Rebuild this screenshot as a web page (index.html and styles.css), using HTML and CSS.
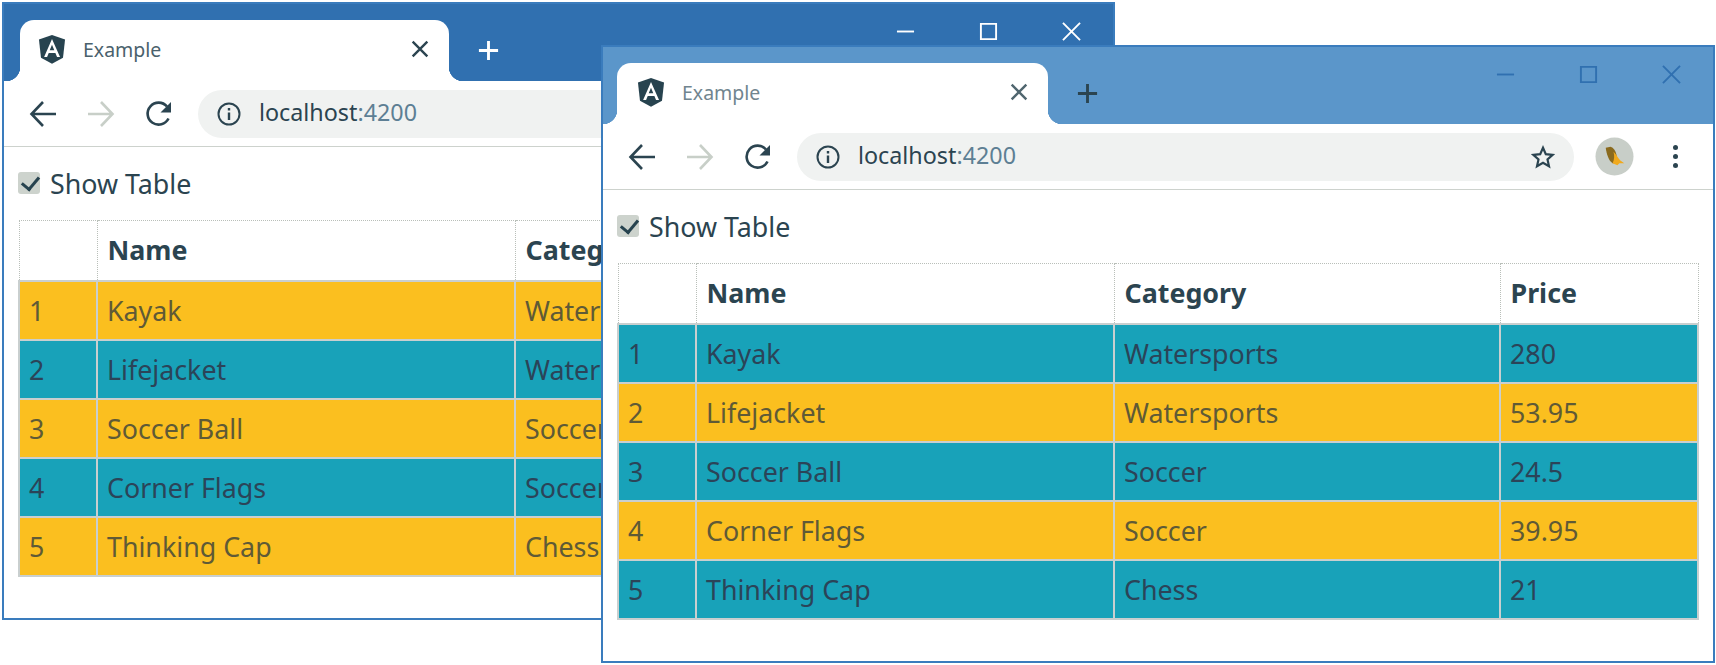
FILE: index.html
```html
<!DOCTYPE html>
<html>
<head lang="en">
    <meta charset="UTF-8">
    <title>Example</title>
    <link rel="stylesheet" href="styles.css">
</head>
<body>
    <svg class="defs" width="0" height="0">
        <symbol id="i-ng" viewBox="0 0 250 250">
            <path fill="currentColor" d="M125 22 29 56l15 133 81 45 81-45 15-133z"/>
            <path fill="#fff" fill-rule="evenodd" d="M125 52 67 183h22l12-29h49l12 29h22zM142 135h-34l17-41z"/>
        </symbol>
        <symbol id="i-x" viewBox="0 0 24 24">
            <path fill="none" stroke="currentColor" stroke-width="2.6" d="M4 4l16 16M20 4 4 20"/>
        </symbol>
        <symbol id="i-plus" viewBox="0 0 24 24">
            <path fill="none" stroke="currentColor" stroke-width="3" d="M12 2v20M2 12h20"/>
        </symbol>
        <symbol id="i-back" viewBox="0 0 28 28">
            <path fill="none" stroke="currentColor" stroke-width="2.6" d="M27 14H3M14 2 2.500 14 14 26"/>
        </symbol>
        <symbol id="i-fwd" viewBox="0 0 28 28">
            <path fill="none" stroke="currentColor" stroke-width="2.6" d="M1 14h24M14 2l11.500 12L14 26"/>
        </symbol>
        <symbol id="i-reload" viewBox="0 0 28 28">
            <path fill="none" stroke="currentColor" stroke-width="2.600" d="M23.500 18.500A11 11 0 1 1 22 6.500"/>
            <path fill="currentColor" d="M26 2v10.500H15.500z"/>
        </symbol>
        <symbol id="i-info" viewBox="0 0 24 24">
            <circle cx="12" cy="12" r="10.500" fill="none" stroke="currentColor" stroke-width="2"/>
            <path fill="currentColor" d="M10.800 10.500h2.400V18h-2.400zM10.800 6h2.400v2.500h-2.400z"/>
        </symbol>
        <symbol id="i-star" viewBox="0 0 24 24">
            <path fill="none" stroke="currentColor" stroke-width="2.200" d="M12 2.800l2.800 6.300 6.900.7-5.200 4.600 1.500 6.800-6-3.500-6 3.500 1.500-6.800-5.200-4.600 6.900-.7z"/>
        </symbol>
        <symbol id="i-bird" viewBox="0 0 40 40">
            <circle cx="20" cy="20" r="19.500" fill="#c8cec8"/>
            <path fill="#8a6a1e" d="M11 11l5-1c3 1 5 4 6 8l1 9-5 0c-4-3-6-9-7-16z"/>
            <path fill="#f0a91c" d="M19 15c3 3 5 7 7 9l4 3-5 0-2 2-5-2c2-4 2-8 1-12z"/>
        </symbol>
        <symbol id="i-min" viewBox="0 0 20 20">
            <path fill="none" stroke="currentColor" stroke-width="2" d="M1 10h18"/>
        </symbol>
        <symbol id="i-max" viewBox="0 0 20 20">
            <path fill="none" stroke="currentColor" stroke-width="2" d="M2 2h16v16H2z"/>
        </symbol>
        <symbol id="i-close" viewBox="0 0 20 20">
            <path fill="none" stroke="currentColor" stroke-width="2" d="M1 1l18 18M19 1 1 19"/>
        </symbol>
    </svg>

    <div class="window window-back">
        <div class="titlebar">
            <div class="tab">
                <svg class="tab-logo"><use href="#i-ng"/></svg>
                <span class="tab-title">Example</span>
                <svg class="tab-close"><use href="#i-x"/></svg>
            </div>
            <svg class="new-tab"><use href="#i-plus"/></svg>
            <div class="controls">
                <div class="control"><svg><use href="#i-min"/></svg></div>
                <div class="control"><svg><use href="#i-max"/></svg></div>
                <div class="control"><svg><use href="#i-close"/></svg></div>
            </div>
        </div>
        <div class="toolbar">
            <div class="nav"><svg><use href="#i-back"/></svg></div>
            <div class="nav nav-off"><svg><use href="#i-fwd"/></svg></div>
            <div class="nav"><svg><use href="#i-reload"/></svg></div>
            <div class="omnibox">
                <svg class="info"><use href="#i-info"/></svg>
                <span class="url">localhost<span class="port">:4200</span></span>
                <svg class="star"><use href="#i-star"/></svg>
            </div>
            <svg class="avatar"><use href="#i-bird"/></svg>
            <div class="dots"><i></i><i></i><i></i></div>
        </div>
        <div class="page">
            <label class="show"><input class="check" type="checkbox" checked> Show Table</label>
            <table class="products">
                <colgroup><col class="c-id"><col class="c-name"><col class="c-cat"><col class="c-price"></colgroup>
                <thead><tr><th></th><th>Name</th><th>Category</th><th>Price</th></tr></thead>
                <tbody>
                    <tr class="amber"><td>1</td><td>Kayak</td><td>Watersports</td><td>280</td></tr>
                    <tr class="teal"><td>2</td><td>Lifejacket</td><td>Watersports</td><td>53.95</td></tr>
                    <tr class="amber"><td>3</td><td>Soccer Ball</td><td>Soccer</td><td>24.5</td></tr>
                    <tr class="teal"><td>4</td><td>Corner Flags</td><td>Soccer</td><td>39.95</td></tr>
                    <tr class="amber"><td>5</td><td>Thinking Cap</td><td>Chess</td><td>21</td></tr>
                </tbody>
            </table>
        </div>
    </div>

    <div class="window window-front">
        <div class="titlebar">
            <div class="tab">
                <svg class="tab-logo"><use href="#i-ng"/></svg>
                <span class="tab-title">Example</span>
                <svg class="tab-close"><use href="#i-x"/></svg>
            </div>
            <svg class="new-tab"><use href="#i-plus"/></svg>
            <div class="controls">
                <div class="control"><svg><use href="#i-min"/></svg></div>
                <div class="control"><svg><use href="#i-max"/></svg></div>
                <div class="control"><svg><use href="#i-close"/></svg></div>
            </div>
        </div>
        <div class="toolbar">
            <div class="nav"><svg><use href="#i-back"/></svg></div>
            <div class="nav nav-off"><svg><use href="#i-fwd"/></svg></div>
            <div class="nav"><svg><use href="#i-reload"/></svg></div>
            <div class="omnibox">
                <svg class="info"><use href="#i-info"/></svg>
                <span class="url">localhost<span class="port">:4200</span></span>
                <svg class="star"><use href="#i-star"/></svg>
            </div>
            <svg class="avatar"><use href="#i-bird"/></svg>
            <div class="dots"><i></i><i></i><i></i></div>
        </div>
        <div class="page">
            <label class="show"><input class="check" type="checkbox" checked> Show Table</label>
            <table class="products">
                <colgroup><col class="c-id"><col class="c-name"><col class="c-cat"><col class="c-price"></colgroup>
                <thead><tr><th></th><th>Name</th><th>Category</th><th>Price</th></tr></thead>
                <tbody>
                    <tr class="teal"><td>1</td><td>Kayak</td><td>Watersports</td><td>280</td></tr>
                    <tr class="amber"><td>2</td><td>Lifejacket</td><td>Watersports</td><td>53.95</td></tr>
                    <tr class="teal"><td>3</td><td>Soccer Ball</td><td>Soccer</td><td>24.5</td></tr>
                    <tr class="amber"><td>4</td><td>Corner Flags</td><td>Soccer</td><td>39.95</td></tr>
                    <tr class="teal"><td>5</td><td>Thinking Cap</td><td>Chess</td><td>21</td></tr>
                </tbody>
            </table>
        </div>
    </div>
</body>
</html>
```

FILE: styles.css
```css
*{
    padding:0;
    margin:0;
    box-sizing:border-box;
}
html,body{
    height:100%;
    overflow:hidden;
    background:#fff;
}
body{
    position:relative;
    font-family:"Noto Sans","Liberation Sans",sans-serif;
    color:#2b4450;
}
.defs{
    display:block;
}

/* the two windows sit on a free desktop */
.window{
    position:absolute;
    width:1113px;
    height:618px;
    background:#fff;
    border:2px solid #3a7cbd;
    overflow:hidden;
}
.window-back{
    left:2px;
    top:2px;
}
.window-front{
    left:601px;
    top:45px;
    width:1114px;
}

.titlebar{
    height:77px;
    display:flex;
    align-items:flex-end;
    position:relative;
}
.window-back .titlebar{
    background:#3070b0;
    color:#fff;
}
.window-front .titlebar{
    background:#5b96ca;
    color:#2b4450;
}
.tab{
    width:429px;
    height:61px;
    margin-left:16px;
    padding:0 18px 3px 15px;
    background:#fff;
    border-radius:14px 14px 0 0;
    display:flex;
    align-items:center;
    position:relative;
    color:#2b4450;
}
.window-front .tab{
    width:431px;
    margin-left:14px;
}
.tab:before,.tab:after{
    content:"";
    position:absolute;
    bottom:0;
    width:14px;
    height:14px;
}
.tab:before{
    left:-14px;
    background:radial-gradient(circle at 0 0,transparent 14px,#fff 14.500px);
}
.tab:after{
    right:-14px;
    background:radial-gradient(circle at 100% 0,transparent 14px,#fff 14.500px);
}
.tab-logo{
    width:34px;
    height:34px;
    color:#27434f;
}
.tab-title{
    margin-left:14px;
    font-size:19.500px;
    color:#4a616c;
}
.tab-close{
    width:22px;
    height:22px;
    margin-left:auto;
}
.window-front .tab-logo{
    margin-left:2px;
}
.window-front .tab-title{
    color:#71858f;
}
.window-front .tab-close{
    color:#50666f;
}
.new-tab{
    width:23px;
    height:23px;
    margin:0 0 19px 28px;
}
.controls{
    margin-left:auto;
    align-self:flex-start;
    display:flex;
}
.control{
    width:83px;
    height:54px;
    display:flex;
    align-items:center;
    justify-content:center;
}
.control svg{
    width:19px;
    height:19px;
}
.window-front .control{
    color:#3070b0;
}

.toolbar{
    height:66px;
    padding-left:10px;
    display:flex;
    align-items:center;
    border-bottom:1px solid #cdd2cd;
}
.nav{
    width:58px;
    display:flex;
    justify-content:center;
}
.nav svg{
    width:28px;
    height:28px;
    color:#2b4450;
}
.nav-off svg{
    color:#c8cfc8;
}
.omnibox{
    width:777px;
    height:48px;
    margin-left:10px;
    padding:0 19px;
    border-radius:24px;
    background:#f0f2f1;
    display:flex;
    align-items:center;
}
.info{
    width:24px;
    height:24px;
    color:#2b4450;
}
.url{
    margin:-3px 0 0 18px;
    font-size:23.300px;
    color:#2b4450;
}
.port{
    color:#5d7f94;
}
.star{
    width:24px;
    height:24px;
    margin-left:auto;
    color:#2b4450;
}
.avatar{
    width:39px;
    height:39px;
    margin-left:21px;
}
.dots{
    margin-left:39px;
    display:flex;
    flex-direction:column;
    gap:4px;
}
.dots i{
    display:block;
    width:5px;
    height:5px;
    border-radius:50%;
    background:#2b4450;
}

.page{
    padding:19px 15px 0 14px;
}
.show{
    height:36px;
    display:flex;
    align-items:center;
    gap:10px;
    font-size:26.800px;
    line-height:36px;
}
.check{
    appearance:none;
    width:22px;
    height:22px;
    margin-top:-2px;
    border-radius:3px;
    background:#cdd3cd;
    position:relative;
}
.check:checked:before{
    content:"";
    position:absolute;
    left:7px;
    top:1px;
    width:8px;
    height:14px;
    border:solid #27434f;
    border-width:0 3px 3px 0;
    transform:rotate(40deg);
}
.products{
    width:1080px;
    margin-top:18px;
    table-layout:fixed;
    border-collapse:collapse;
    font-size:26.800px;
    line-height:36px;
}
.c-id{width:78px;}
.c-name{width:418px;}
.c-cat{width:386px;}
.c-price{width:198px;}
.products th{
    height:60px;
    padding:0 10px;
    text-align:left;
    font-weight:700;
    border:1px dotted #b9bfb9;
}
.products td{
    height:59px;
    padding:2px 9px 0;
    border:2px solid #c9cfcf;
}
.amber{
    background:#fbbf1f;
    color:#5f5a36;
}
.teal{
    background:#18a2b9;
    color:#2b4458;
}
```
